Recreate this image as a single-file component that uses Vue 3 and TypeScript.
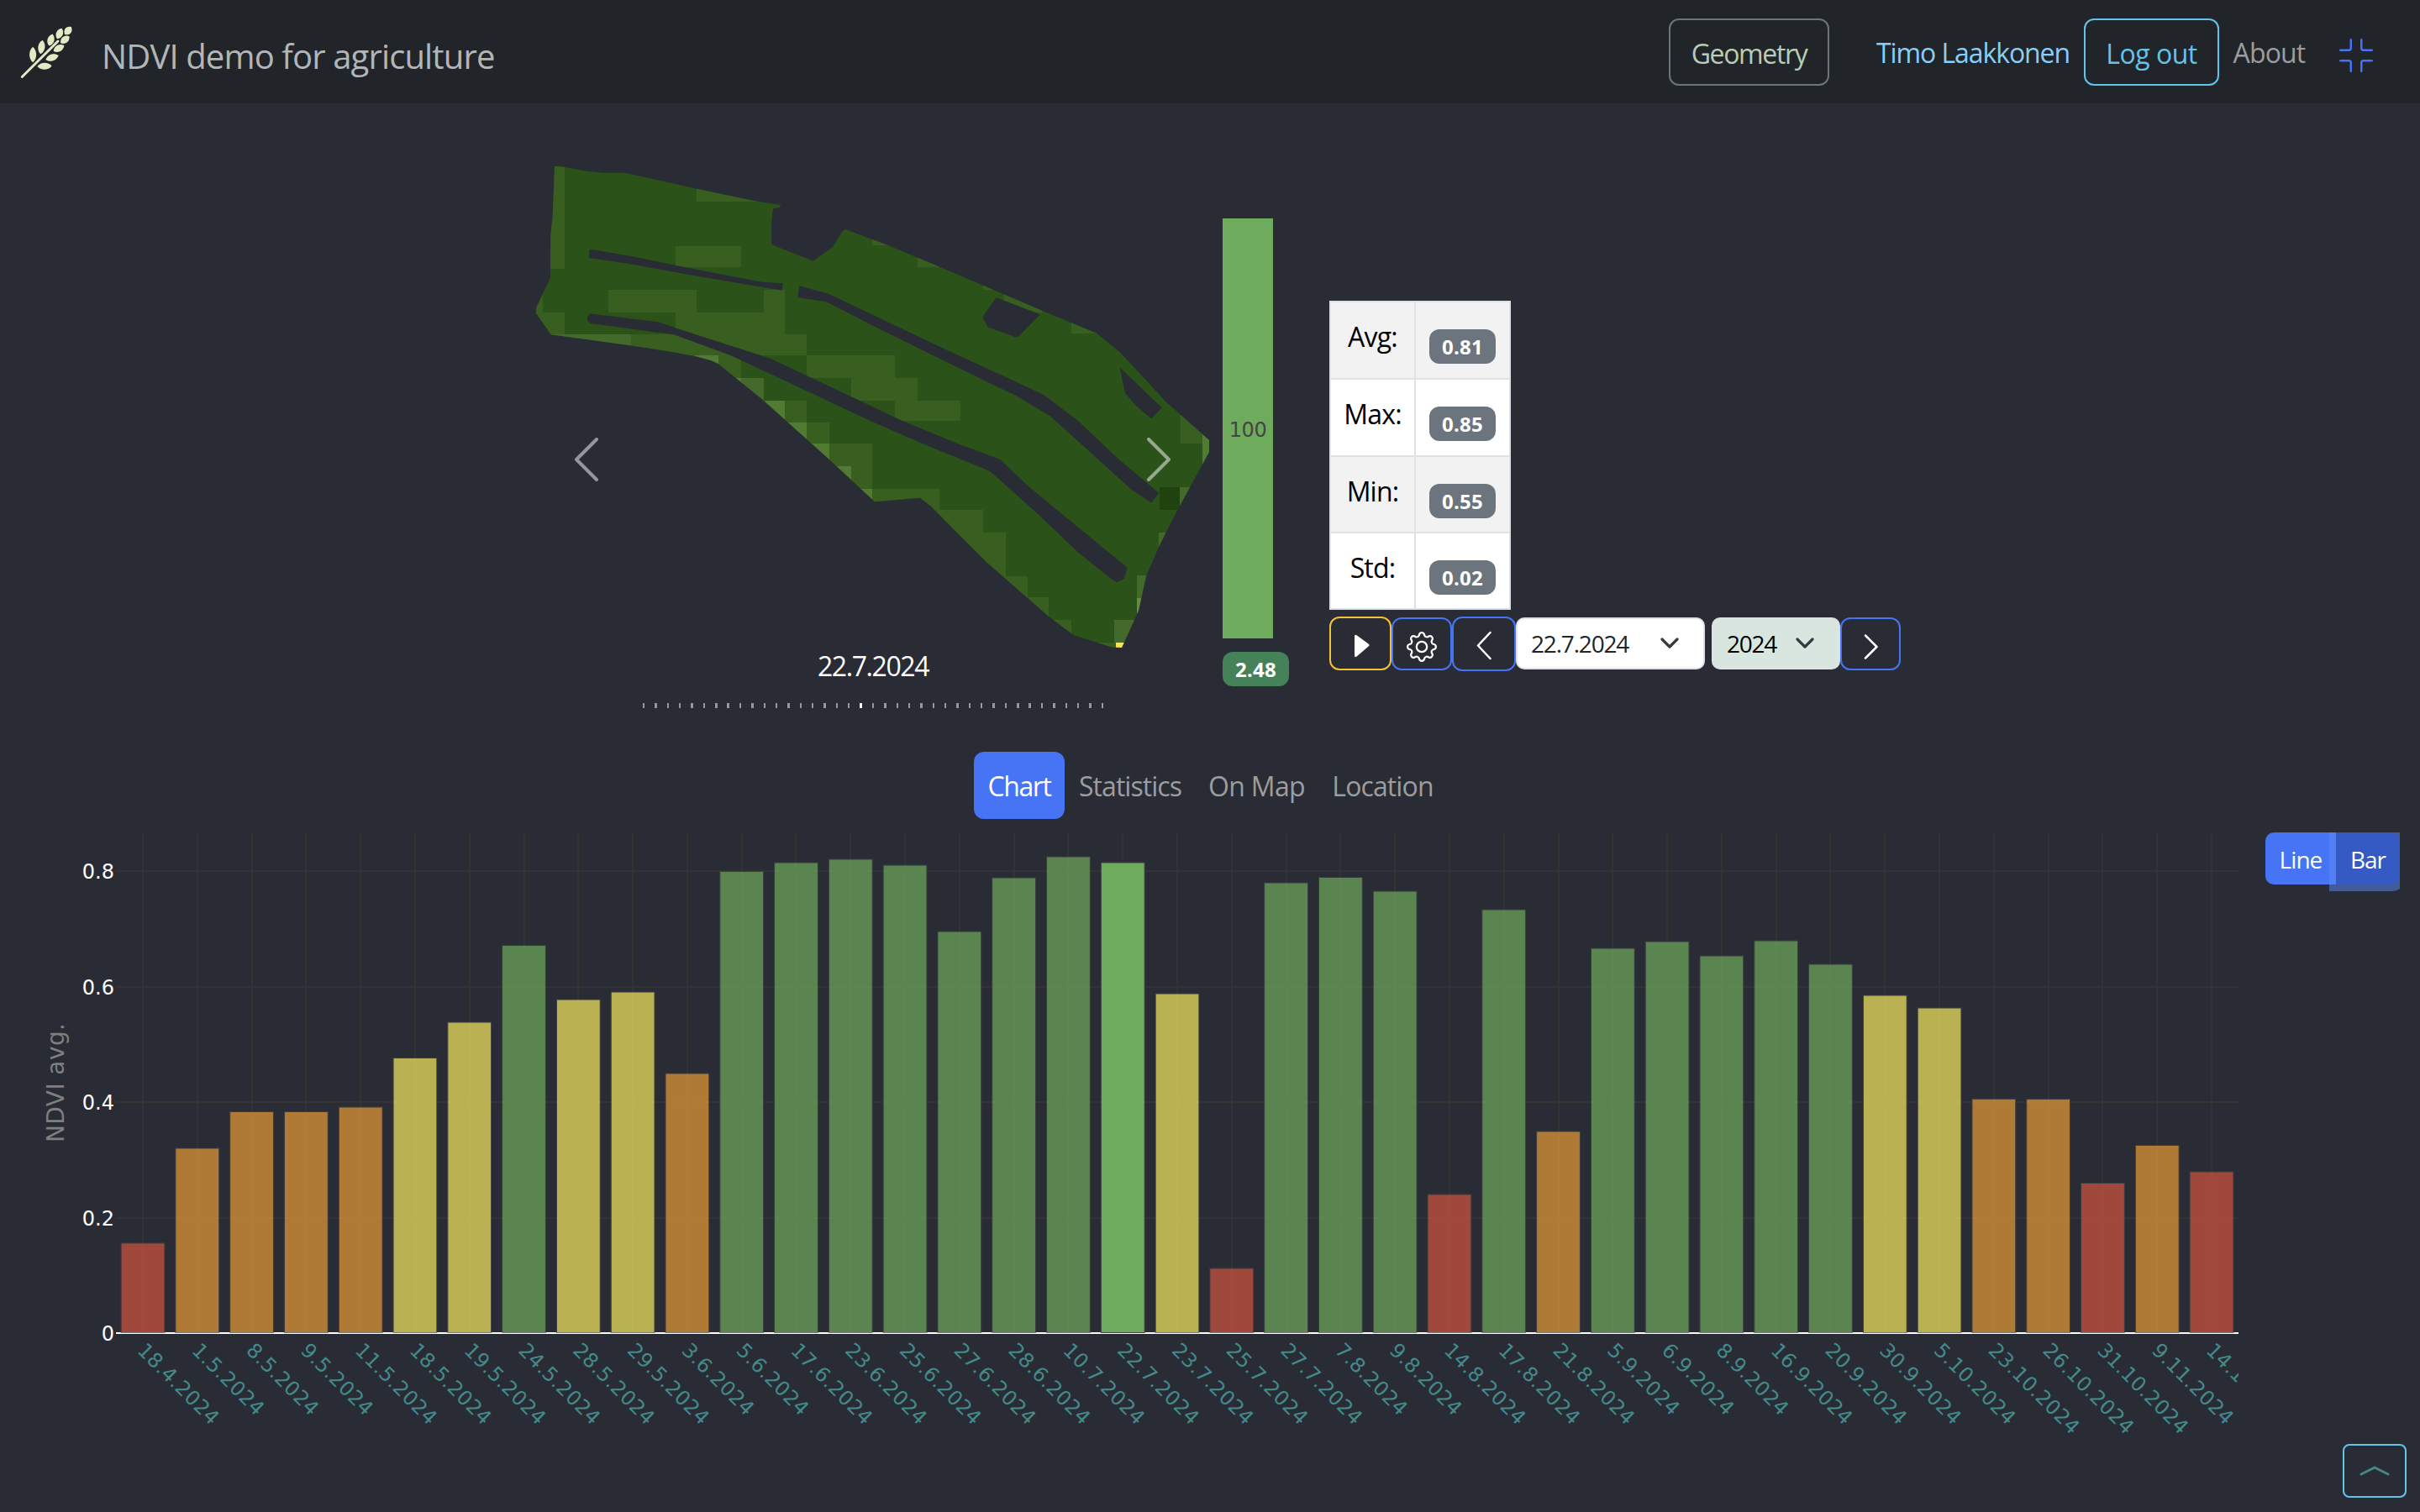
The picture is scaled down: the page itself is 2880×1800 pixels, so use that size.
<script setup lang="ts">
interface Bar { date: string; top: number }
interface Leaf { x: number; y: number; r: number; h: number; w: number }
type Patch = [number, number, number, number, string]

const BASE = 1586.5
const STEP = 64.79
const FIRST = 170

const dates = '18.4 1.5 8.5 9.5 11.5 18.5 19.5 24.5 28.5 29.5 3.6 5.6 17.6 23.6 25.6 27.6 28.6 10.7 22.7 23.7 25.7 27.7 7.8 9.8 14.8 17.8 21.8 5.9 6.9 8.9 16.9 20.9 30.9 5.10 23.10 26.10 31.10 9.11 14.11'.split(' ')
const tops = [1480, 1367, 1323.5, 1323.5, 1318, 1259.5, 1217, 1125.5, 1190, 1181, 1278, 1037.5, 1027, 1023, 1030, 1109, 1045, 1020, 1027, 1183, 1510, 1051, 1044.5, 1061, 1422, 1083, 1347, 1129, 1121, 1138, 1120, 1148, 1185, 1200, 1308.3, 1308.5, 1408.5, 1363.5, 1395]
const bars: Bar[] = dates.map((d, i) => ({ date: d + '.2024', top: tops[i] }))
const selected = 18

function fill(top: number): string {
  const v = ((BASE - top) / 137.4) * 0.2
  if (v < 0.3) return '#d45441'
  if (v < 0.46) return '#e79b36'
  if (v < 0.6) return '#f7ea5f'
  return '#6fab5c'
}
const cx = (i: number) => FIRST + i * STEP

const ticks = [
  { label: '0.8', y: 1037 },
  { label: '0.6', y: 1175 },
  { label: '0.4', y: 1312 },
  { label: '0.2', y: 1450 },
  { label: '0', y: 1587 },
]

const stats = [
  { name: 'Avg:', value: '0.81' },
  { name: 'Max:', value: '0.85' },
  { name: 'Min:', value: '0.55' },
  { name: 'Std:', value: '0.02' },
]

const leaves: Leaf[] = [
  { x: 39.1, y: 65, r: 0, h: 9.3, w: 5.4 },
  { x: 49.4, y: 56, r: 8, h: 8.4, w: 5.4 },
  { x: 60.5, y: 47.5, r: 16, h: 7.4, w: 5.4 },
  { x: 70.8, y: 40, r: 24, h: 6.9, w: 5.4 },
  { x: 81, y: 36.5, r: 40, h: 6, w: 5.6 },
  { x: 77.3, y: 47.3, r: 52, h: 6.6, w: 5.4 },
  { x: 70, y: 57.5, r: 62, h: 7.2, w: 5.4 },
  { x: 62, y: 68.5, r: 72, h: 8, w: 5.4 },
  { x: 53, y: 78.8, r: 88, h: 8.6, w: 5.4 },
]
const leafPath = (l: Leaf) =>
  `M0 ${-l.h}C${l.w} ${-l.h / 2} ${l.w} ${l.h / 2} 0 ${l.h}C${-l.w} ${l.h / 2} ${-l.w} ${-l.h / 2} 0 ${-l.h}Z`

const A = '#385f20'
const B = '#43692b'
const C = '#517a33'
/* x1, y1, x2, y2, colour of each NDVI raster block */
const patches: Patch[] = [
  [650, 190, 672.3, 320, A], [828.7, 220, 935, 240.3, A], [803.7, 293.3, 882, 318.3, A],
  [724.3, 345, 828.7, 371.7, A], [908.7, 345, 933.7, 371.7, A], [803.7, 371.7, 933.7, 398.3, A],
  [638, 340, 645.7, 371.7, A], [638, 371.7, 672.3, 398.3, A], [655, 398.3, 750.7, 425, B],
  [750.7, 398.3, 960, 423.3, A], [827, 423.3, 855.3, 450, C], [855.3, 423.3, 882, 450, A],
  [750.7, 415, 827, 430, A],
  [960, 423.3, 1065, 450, A], [870, 450, 882, 476.7, C], [882, 450, 908.7, 476.7, B],
  [1013.3, 450, 1091.7, 476.7, A], [900, 476.7, 933.7, 503.3, C], [933.7, 476.7, 960, 503.3, A],
  [1065, 476.7, 1143.3, 501.2, A], [930, 503.3, 960, 528.3, C], [960, 503.3, 986.7, 528.3, A],
  [955, 528.3, 986.7, 555, C], [986.7, 528.3, 1038.3, 555, A], [980, 555, 1013.3, 581.7, C],
  [1013.3, 555, 1038.3, 581.7, A], [1010, 581.7, 1038.3, 606.6, C], [1038.3, 581.7, 1118.3, 606.6, A],
  [1090, 606.6, 1170, 633.6, A], [1090, 633.6, 1196.7, 686, A], [1150, 686, 1223.3, 711, A],
  [1200, 711, 1248.3, 738, A], [1220, 738, 1275, 764.5, A], [1270, 764.5, 1328, 775, A],
  [1038.3, 280, 1065, 292, A], [1091.7, 300, 1120, 318.4, A], [1169.7, 330, 1183, 345, A],
  [1195, 340, 1240, 371.7, A], [1275, 380, 1310, 397.2, A], [1405, 490, 1431, 528, A],
  [1431, 510, 1440, 553, C], [1380, 580, 1404, 606.6, '#1f420f'], [1404, 580, 1420, 606.6, B],
  [1379.3, 633.6, 1392, 655, B], [1352.7, 685, 1368, 712, B], [1352.7, 712, 1362, 730, '#628b3e'],
  [1326.3, 738.3, 1360, 764.5, B], [1328, 764.5, 1340, 775, '#f9e355'],
]

const outline = 'M660 198L669 198.5L696.7 203.5L716.7 205.7L744 205.7L826.7 224.3L896.7 239L929.3 244L928 246.5L920 248.7L918 266L918 291L967.7 310.7L991 294L1003.3 274.3L1006.7 273.3L1060 293.3L1120 318.4L1240 369.8L1305 396.8L1333.3 419.8L1388.3 479L1439 524L1439 538L1401.7 606.6L1380 649L1364 686L1355 727L1335 771L1323.3 770.5L1278.3 756.4L1248.3 734L1173.3 668.4L1108.3 603L1095 592.5L1070 594.8L1040.7 597.3L1036.7 593.3L986.7 546.7L906.7 475L855 433.3L846.7 429.3L827.3 424L800 418.7L750 411.3L655.7 398.3L638 372.7L638 366.7L655 330.7L655.3 280.7L657.7 256.7Z'
const gaps = 'M701 298.3L703.3 296.7L750 304.7L833.3 321.7L906.7 335.7L931.7 337.3L930.7 345.7L906.7 341.7L826.7 328.3L746.7 313.7L701 307ZM951.3 340.3L986.7 350L1060 385L1120 413.5L1190 445.7L1241.7 469.7L1283.3 501.2L1330 545.6L1379.3 587L1370 598.5L1346 582.6L1293.3 534.5L1250 495.6L1210 471.6L1170 452.3L1100 418L1040 388.3L983.3 359.3L949.3 354ZM699.3 376.7L701.7 373.3L783.3 383.3L805 390.7L916.7 426.7L1040 484.9L1070 499.3L1140 528.2L1190 546.7L1221.7 577L1283.3 628L1341.7 675.8L1337.7 689L1329.3 693.2L1323.3 689.8L1283.3 657.7L1233.3 610.3L1178.3 561L1100 528.9L1040 503L970 470L870 423.3L801.7 398.3L720 387.3L702.7 385L699.3 382ZM1185.7 354.3L1238 374.3L1211.7 400.9L1208.3 401.3L1176 389.4L1169.7 379L1171 374.6ZM1332.7 437.2L1382.7 485.6L1370.3 498.6L1351.7 482.7L1339 467.9Z'
</script>

<template>
  <div class="page">
    <header class="nav">
      <svg class="logo" viewBox="24 30 64 64">
        <path d="M26.3 91.5L69 49" class="stem" />
        <path v-for="(l, i) in leaves" :key="i" :d="leafPath(l)" :transform="`translate(${l.x} ${l.y}) rotate(${l.r})`" />
      </svg>
      <span class="title">NDVI demo for agriculture</span>
      <nav class="links">
        <button class="btn geometry">Geometry</button>
        <span class="user">Timo Laakkonen</span>
        <button class="btn logout">Log out</button>
        <span class="about">About</span>
        <svg class="exit" viewBox="0 0 16 16"><path d="M5.5 0a.5.5 0 0 1 .5.5v4A1.5 1.5 0 0 1 4.5 6h-4a.5.5 0 0 1 0-1h4a.5.5 0 0 0 .5-.5v-4a.5.5 0 0 1 .5-.5zm5 0a.5.5 0 0 1 .5.5v4a.5.5 0 0 0 .5.5h4a.5.5 0 0 1 0 1h-4A1.5 1.5 0 0 1 10 4.5v-4a.5.5 0 0 1 .5-.5zM0 10.5a.5.5 0 0 1 .5-.5h4A1.5 1.5 0 0 1 6 11.5v4a.5.5 0 0 1-1 0v-4a.5.5 0 0 0-.5-.5h-4a.5.5 0 0 1-.5-.5zm10 1a1.5 1.5 0 0 1 1.5-1.5h4a.5.5 0 0 1 0 1h-4a.5.5 0 0 0-.5.5v4a.5.5 0 0 1-1 0v-4z" /></svg>
      </nav>
    </header>

    <section class="hero">
      <div class="carousel">
        <svg class="field" viewBox="638 190 802 582">
          <clipPath id="field"><path :d="outline" /></clipPath>
          <g clip-path="url(#field)" shape-rendering="crispEdges">
            <rect x="638" y="190" width="802" height="582" fill="#2b5219" />
            <rect v-for="(p, i) in patches" :key="i" :x="p[0]" :y="p[1]" :width="p[2] - p[0]" :height="p[3] - p[1]" :fill="p[4]" />
          </g>
          <path :d="gaps" class="gap" />
        </svg>
        <svg class="arrow left" viewBox="0 0 32 56"><path d="M28 4L4 28L28 52" /></svg>
        <svg class="arrow right" viewBox="0 0 32 56"><path d="M4 4L28 28L4 52" /></svg>
        <div class="caption">22.7.2024</div>
        <div class="dots"><i v-for="n in 39" :key="n" :class="{ on: n === selected + 1 }"></i></div>
      </div>

      <div class="gauge">
        <div class="level">100</div>
        <span class="badge green">2.48</span>
      </div>

      <div class="side">
        <div class="table">
          <div v-for="s in stats" :key="s.name" class="row">
            <span class="name">{{ s.name }}</span>
            <span class="cell"><span class="badge">{{ s.value }}</span></span>
          </div>
        </div>
        <div class="controls">
          <button class="ctl play"><svg width="74" height="64" viewBox="0 0 74 64"><path d="M30 23.5q0-3 2.600-1.200l14 10.200q2 1.500 0 3l-14 12q-2.600 1.800-2.600-1.200z" /></svg></button>
          <button class="ctl gear"><svg width="36" height="36" viewBox="0 0 16 16"><path d="M8 4.754a3.246 3.246 0 1 0 0 6.492 3.246 3.246 0 0 0 0-6.492zM5.754 8a2.246 2.246 0 1 1 4.492 0 2.246 2.246 0 0 1-4.492 0z" /><path d="M9.796 1.343c-.527-1.790-3.065-1.790-3.592 0l-.094.319a.873.873 0 0 1-1.255.52l-.292-.16c-1.640-.892-3.433.902-2.540 2.541l.159.292a.873.873 0 0 1-.52 1.255l-.319.094c-1.790.527-1.790 3.065 0 3.592l.319.094a.873.873 0 0 1 .52 1.255l-.16.292c-.892 1.640.901 3.434 2.541 2.540l.292-.159a.873.873 0 0 1 1.255.52l.094.319c.527 1.790 3.065 1.790 3.592 0l.094-.319a.873.873 0 0 1 1.255-.52l.292.16c1.640.893 3.434-.902 2.540-2.541l-.159-.292a.873.873 0 0 1 .52-1.255l.319-.094c1.790-.527 1.790-3.065 0-3.592l-.319-.094a.873.873 0 0 1-.52-1.255l.16-.292c.893-1.640-.902-3.433-2.541-2.540l-.292.159a.873.873 0 0 1-1.255-.52l-.094-.319zm-2.633.283c.246-.835 1.428-.835 1.674 0l.094.319a1.873 1.873 0 0 0 2.693 1.115l.291-.16c.764-.415 1.600.42 1.184 1.185l-.159.292a1.873 1.873 0 0 0 1.116 2.692l.318.094c.835.246.835 1.428 0 1.674l-.319.094a1.873 1.873 0 0 0-1.115 2.693l.16.291c.415.764-.42 1.600-1.185 1.184l-.291-.159a1.873 1.873 0 0 0-2.693 1.116l-.094.318c-.246.835-1.428.835-1.674 0l-.094-.319a1.873 1.873 0 0 0-2.692-1.115l-.292.16c-.764.415-1.600-.42-1.184-1.185l.159-.291A1.873 1.873 0 0 0 1.945 8.930l-.319-.094c-.835-.246-.835-1.428 0-1.674l.319-.094A1.873 1.873 0 0 0 3.060 4.377l-.16-.292c-.415-.764.42-1.600 1.185-1.184l.292.159a1.873 1.873 0 0 0 2.692-1.115l.094-.319z" /></svg></button>
          <button class="ctl prev"><svg class="line" width="76" height="65" viewBox="0 0 76 65"><path d="M45.5 19L31 34.5L45.5 50" /></svg></button>
          <div class="select date"><span>22.7.2024</span><svg width="24" height="16" viewBox="0 0 24 16"><path d="M3 3L12 12L21 3" /></svg></div>
          <div class="select year"><span>2024</span><svg width="24" height="16" viewBox="0 0 24 16"><path d="M3 3L12 12L21 3" /></svg></div>
          <button class="ctl next"><svg class="line" width="72" height="63" viewBox="0 0 72 63"><path d="M30 21.500L43.500 35L30 48.500" /></svg></button>
        </div>
      </div>
    </section>

    <div class="tabs">
      <span class="tab active">Chart</span>
      <span class="tab stat">Statistics</span>
      <span class="tab map">On Map</span>
      <span class="tab loc">Location</span>
    </div>

    <section class="chart">
      <svg class="plot" viewBox="0 975 2664 825">
        <g class="grid">
          <path v-for="(b, i) in bars" :key="b.date" :d="`M${Math.round(cx(i))} 991V1586`" />
          <path v-for="t in ticks.slice(0, 4)" :key="t.label" :d="`M138 ${t.y}H2664`" />
        </g>
        <path d="M138 1587H2664" class="axis" />
        <rect v-for="(b, i) in bars" :key="'b' + b.date" :x="cx(i) - 25.9" :y="b.top" width="51.8" :height="BASE - b.top" :fill="fill(b.top)" :opacity="i === selected ? 1 : 0.7" class="bar" />
        <text v-for="t in ticks" :key="'t' + t.label" x="136" :y="t.y + 8.6" class="tick">{{ t.label }}</text>
        <text v-for="(b, i) in bars" :key="'d' + b.date" :transform="`translate(${cx(i) - 7.8} 1609) rotate(45)`" class="day">{{ b.date }}</text>
        <text transform="translate(76.300 1289) rotate(-90)" class="ylabel" textLength="142">NDVI avg.</text>
      </svg>
      <aside class="tools">
        <div class="toggle">
          <button class="line-btn">Line</button>
          <button class="bar-btn">Bar</button>
        </div>
        <button class="up"><svg width="40" height="20" viewBox="0 0 40 20"><path d="M4 14L20 6L36 14" /></svg></button>
      </aside>
    </section>
  </div>
</template>

<style>
body { margin: 0; background: #292c34; }
</style>

<style scoped>
.page { width: 2880px; height: 1800px; overflow: hidden; display: flex; flex-direction: column; background: #292c34; font-family: "Open Sans", "Noto Sans", sans-serif; font-size: 32px; }
button { font: inherit; letter-spacing: inherit; background: none; padding: 0; margin: 0; box-sizing: border-box; }
.nav { height: 123px; flex: none; display: flex; background: #212529; box-sizing: border-box; padding: 0 56px 0 24px; }
.logo { width: 64px; height: 64px; margin-top: 30px; fill: #e1e9c5; }
.stem { stroke: #e1e9c5; stroke-width: 3; stroke-linecap: round; }
.title { margin-left: 33px; margin-top: 37px; font-size: 40px; line-height: 60px; letter-spacing: -0.860px; color: #b3b6b9; white-space: nowrap; }
.links { margin-left: auto; display: flex; padding-top: 22px; text-align: center; white-space: nowrap; }
.btn { height: 80px; border: 2px solid; border-radius: 12px; line-height: 77px; padding-top: 1px; }
.geometry { width: 191px; border-color: #6c757d; color: #b9cdb5; margin-right: 39px; letter-spacing: -1.370px; }
.user { width: 264px; line-height: 82px; color: #87cefa; letter-spacing: -1.090px; }
.logout { width: 161px; border-color: #62c4e8; color: #62c4e8; letter-spacing: -0.500px; }
.about { width: 119px; line-height: 82px; color: #9b9d9f; letter-spacing: -0.850px; }
.exit { width: 40px; height: 40px; margin: 24px 0 0 24px; fill: #4674f5; }

.hero { height: 772px; flex: none; display: flex; padding-left: 638px; align-items: flex-start; }
.carousel { position: relative; width: 802px; display: flex; flex-direction: column; align-items: center; }
.field { display: block; width: 802px; height: 582px; margin-top: 67px; }
.gap { fill: #292c34; }
.arrow { position: absolute; width: 32px; height: 56px; top: 396px; fill: none; stroke: #fff; stroke-width: 4; stroke-linecap: round; stroke-linejoin: round; opacity: 0.5; }
.left { left: 44px; }
.right { left: 725px; }
.caption { line-height: 42px; color: #fff; letter-spacing: -1.410px; }
.dots { display: flex; gap: 11.970px; margin-top: 23px; }
.dots i { width: 2.400px; height: 6px; background: #97989c; }
.dots .on { background: #fff; }
.gauge { margin: 137px 48px 0 15px; width: 79px; display: flex; flex-direction: column; align-items: flex-start; }
.level { width: 60px; height: 500px; text-align: center; background: #6fab5c; color: #444; font: 24px/504px "DejaVu Sans", sans-serif; letter-spacing: -0.500px; overflow: hidden; }
.badge { display: block; width: 79px; height: 41px; border-radius: 12px; background: #6c757d; color: #fff; font-size: 24px; font-weight: 700; line-height: 42px; text-align: center; letter-spacing: 0.200px; }
.green { margin-top: 16px; background: #468259; }
.side { margin-top: 235px; }
.table { width: 216px; height: 368px; box-sizing: border-box; border: 2px solid #dee2e6; display: grid; grid-template-rows: 92px 91.500px 91.500px 1fr; background: #fff; color: #000; }
.row { display: flex; border-bottom: 2px solid #dee2e6; box-sizing: border-box; }
.row:last-child { border-bottom: 0; }
.row:nth-child(odd) { background: #f2f2f2; }
.name { width: 101px; box-sizing: border-box; border-right: 2px solid #dee2e6; text-align: center; line-height: 82px; letter-spacing: -0.800px; }
.cell { padding: 32px 0 0 16px; }
.controls { display: flex; align-items: flex-start; margin-top: 8px; }
.ctl { border: 2px solid #4674f5; border-radius: 12px; height: 63px; margin-top: 1px; display: flex; align-items: center; justify-content: center; fill: #fff; }
.ctl svg { flex: none; }
.play { width: 74px; height: 64px; margin-top: 0; border-color: #f3c13a; }
.gear { width: 72px; padding-top: 7px; }
.prev { width: 76px; height: 65px; margin-top: 0; }
.next { width: 72px; }
.line { fill: none; stroke: #fff; stroke-width: 2.500; stroke-linecap: round; stroke-linejoin: round; }
.select { height: 62px; margin-top: 1px; box-sizing: border-box; border: 2px solid #dee2e6; border-radius: 10px; display: flex; align-items: center; justify-content: space-between; background: #fff; color: #212529; font-size: 28px; }
.select span { line-height: 60px; }
.select svg { fill: none; stroke: #343a40; stroke-width: 3.200; stroke-linecap: round; stroke-linejoin: round; }
.date { width: 225px; padding: 0 28px 0 16px; letter-spacing: -1.180px; }
.year { width: 153px; margin-left: 8px; padding: 0 28px 0 16px; background: #d8e6df; color: #000; letter-spacing: -1.300px; }

.tabs { height: 80px; flex: none; display: flex; padding-left: 1159px; text-align: center; line-height: 82px; color: #9c9d9f; white-space: nowrap; }
.active { width: 108px; height: 80px; border-radius: 12px; background: #4674f5; color: #fff; letter-spacing: -1.400px; }
.stat { width: 156px; letter-spacing: -0.960px; }
.map { width: 145px; letter-spacing: -0.640px; }
.loc { width: 155px; letter-spacing: -0.890px; }

.chart { height: 825px; flex: none; display: flex; }
.plot { display: block; width: 2664px; height: 825px; overflow: hidden; font-family: "DejaVu Sans", sans-serif; font-size: 24px; }
.grid path { stroke: #333334; stroke-width: 2; }
.axis { stroke: #fff; stroke-width: 2; }
.bar { stroke: #444; stroke-width: 1; }
.tick { fill: #fff; text-anchor: end; }
.day { fill: #44898a; letter-spacing: 0.400px; }
.ylabel { fill: #7f7f7f; font-size: 28px; text-anchor: middle; }
.tools { width: 216px; display: flex; flex-direction: column; }
.toggle { display: flex; margin: 16px 24px 0 32px; height: 70px; overflow: hidden; font-size: 28px; color: #fff; letter-spacing: -0.950px; }
.toggle button { border: 0; color: #fff; height: 62px; line-height: 62px; padding-top: 1px; }
.line-btn { width: 84px; background: #4674f5; border-radius: 10px 0 0 10px; }
.bar-btn { width: 76px; background: #365ac4; border-radius: 0 10px 10px 0; box-shadow: 0 0 0 8px rgba(95, 138, 247, 0.5); }
.up { width: 76px; height: 64px; margin: auto 16px 17px auto; border: 2px solid #62c4e8; border-radius: 8px; display: flex; align-items: center; justify-content: center; }
.up svg { fill: none; stroke: #45888a; stroke-width: 3; stroke-linecap: round; stroke-linejoin: round; }
</style>
